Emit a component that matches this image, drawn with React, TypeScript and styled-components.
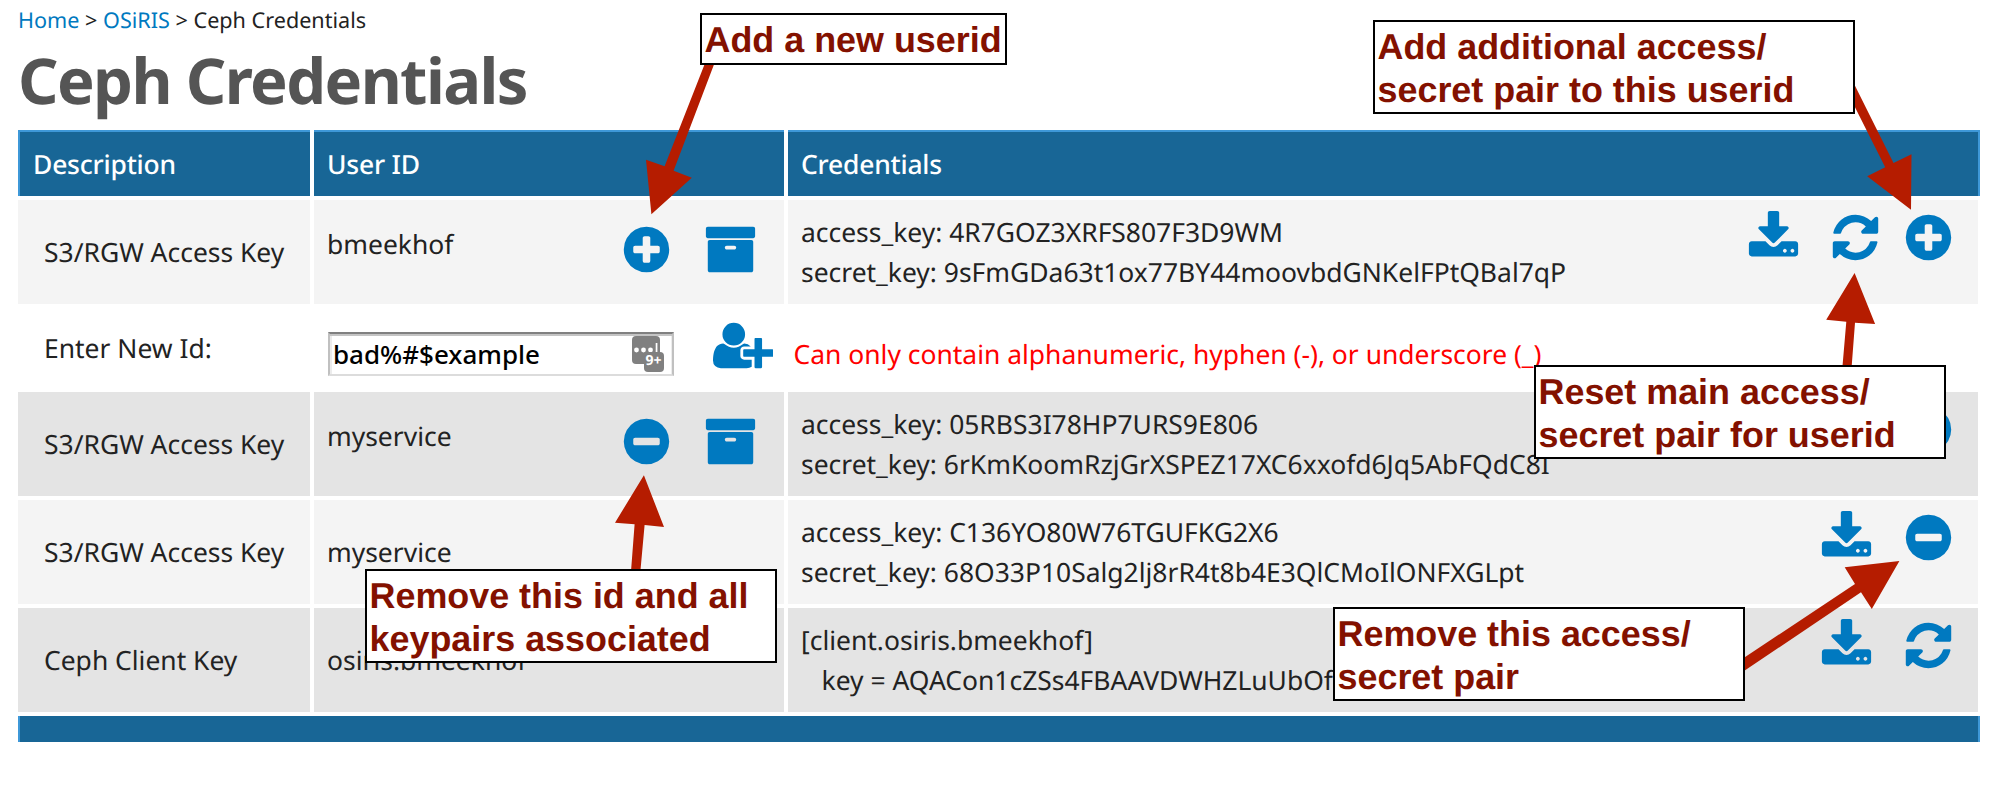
import React from "react";
import styled, { createGlobalStyle } from "styled-components";

const GlobalStyle = createGlobalStyle`
  * { box-sizing: border-box; }
  body {
    margin: 0;
    background: #fff;
    color: #222;
    font-family: "Noto Sans", sans-serif;
    font-size: 26.45px;
    line-height: 40px;
    text-rendering: geometricPrecision;
  }
`;

const Page = styled.div`
  position: relative;
  width: 1996px;
  height: 798px;
  overflow: hidden;
  padding: 0 16px 0 18px;
`;

const Breadcrumb = styled.nav`
  height: 41px;
  padding-top: 1px;
  font-size: 21.6px;
  white-space: nowrap;
`;

const Crumb = styled.a`
  color: #0079c0;
  text-decoration: none;
`;

const Title = styled.h1`
  margin: 0;
  height: 89px;
  color: #555;
  font-size: 63.2px;
  font-weight: 700;
  line-height: 78px;
  letter-spacing: -1.6px;
  white-space: nowrap;
`;

const Table = styled.div`
  display: flex;
  flex-direction: column;
  gap: 4px;
`;

const rowGrid = `
  display: grid;
  grid-template-columns: 292px 470px 1fr;
  column-gap: 4px;
`;

const HeaderRow = styled.div`
  ${rowGrid}
  height: 66px;
`;

const HeaderCell = styled.div`
  background: #186696;
  color: #fff;
  border-top: 2px solid #3e98d8;
  padding: 12px 13px;
  font-weight: 500;
  letter-spacing: -0.2px;
  &:first-child { border-left: 2px solid #3e98d8; }
  &:last-child { border-right: 2px solid #3e98d8; }
`;

const Row = styled.div<{ $shade: "light" | "dark" }>`
  ${rowGrid}
  height: 104px;
  margin-right: 2px;
  & > * { background: ${(p) => (p.$shade === "light" ? "#f4f4f4" : "#e4e4e4")}; }
`;

const DescriptionCell = styled.div`
  display: flex;
  align-items: center;
  padding-left: 26px;
  white-space: nowrap;
`;

const UserCell = styled.div<{ $top: number }>`
  display: flex;
  justify-content: space-between;
  padding: ${(p) => p.$top}px 27px 0 13px;
`;

const CredentialCell = styled.div`
  display: flex;
  justify-content: space-between;
  padding: 12px 23.5px 0 13px;
`;

const Secret = styled.div`
  white-space: pre;
`;

const Actions = styled.div<{ $gap: number }>`
  display: flex;
  gap: ${(p) => p.$gap}px;
  height: 53px;
  margin-top: -1.5px;
`;

const DownloadSlot = styled.span`
  display: flex;
  margin-right: 9px;
`;

const NewIdRow = styled.div`
  ${rowGrid}
  height: 80px;
`;

const NewIdLabel = styled.label`
  padding: 20px 0 0 26px;
`;

const NewIdField = styled.div`
  display: flex;
  align-items: flex-start;
  justify-content: space-between;
  padding: 11px 11px 0 14px;
`;

const InputFrame = styled.div`
  display: flex;
  width: 346px;
  height: 44px;
  margin-top: 13px;
  padding-right: 8px;
  background: #fff;
  border: 2px solid #c0c0c0;
  border-top-color: #808080;
  border-bottom-color: #dcdcdc;
  box-shadow: inset 0 2px 0 #c4c4c4, inset 2px 0 0 #ececec, inset -1px 0 0 #ececec;
`;

const TextInput = styled.input`
  flex: 1;
  min-width: 0;
  height: 40px;
  border: 0;
  outline: 0;
  padding: 0 0 0 3px;
  background: transparent;
  color: #000;
  font: 500 26px "Noto Sans", sans-serif;
`;

const ErrorText = styled.div`
  padding: 26px 0 0 5.5px;
  color: #f00;
  white-space: nowrap;
`;

const FooterBar = styled.div`
  height: 26px;
  background: #186696;
  border: solid #3e98d8;
  border-width: 0 2px;
`;

const Glyph = styled.svg`
  display: block;
  flex: none;
  fill: #0079c0;
`;

const Badge = styled.svg`
  flex: none;
  margin-top: 2px;
`;

const Arrows = styled.svg`
  position: absolute;
  left: 0;
  top: 0;
  fill: #b51c00;
`;

const Note = styled.div<{ $x: number; $y: number; $w: number; $h: number }>`
  position: absolute;
  left: ${(p) => p.$x}px;
  top: ${(p) => p.$y}px;
  width: ${(p) => p.$w}px;
  height: ${(p) => p.$h}px;
  padding: 3.5px 0 0 2.5px;
  border: 2px solid #000;
  background: #fff;
  color: #831100;
  font: 700 35.9px/43px "Liberation Sans", Arial, sans-serif;
  white-space: pre;
`;

const circle =
  "m320-64q0 209-103 385.5t-279.5 279.5-385.5 103-385.5-103-279.5-279.5-103-385.5 103-385.5 279.5-279.5 385.5-103 385.5 103 279.5 279.5 103 385.5z";

const icons = {
  plus:
    "M1344 960v-128q0-26-19-45t-45-19h-256v-256q0-26-19-45t-45-19h-128q-26 0-45 19t-19 45v256h-256q-26 0-45 19t-19 45v128q0 26 19 45t45 19h256v256q0 26 19 45t45 19h128q26 0 45-19t19-45v-256h256q26 0 45-19t19-45z" + circle,
  minus:
    "M1344 960v-128q0-26-19-45t-45-19h-768q-26 0-45 19t-19 45v128q0 26 19 45t45 19h768q26 0 45-19t19-45z" + circle,
  archive:
    "M1088 832q0-26-19-45t-45-19h-256q-26 0-45 19t-19 45 19 45 45 19h256q26 0 45-19t19-45zm576-192v960q0 26-19 45t-45 19h-1408q-26 0-45-19t-19-45v-960q0-26 19-45t45-19h1408q26 0 45 19t19 45zm64-448v256q0 26-19 45t-45 19h-1536q-26 0-45-19t-19-45v-256q0-26 19-45t45-19h1536q26 0 45 19t19 45z",
  download:
    "M1344 1344q0-26-19-45t-45-19-45 19-19 45 19 45 45 19 45-19 19-45zm256 0q0-26-19-45t-45-19-45 19-19 45 19 45 45 19 45-19 19-45zm128-224v320q0 40-28 68t-68 28h-1472q-40 0-68-28t-28-68v-320q0-40 28-68t68-28h465l135 136q58 56 136 56t136-56l136-136h464q40 0 68 28t28 68zm-325-569q17 41-14 70l-448 448q-18 19-45 19t-45-19l-448-448q-31-29-14-70 17-39 59-39h256v-448q0-26 19-45t45-19h256q26 0 45 19t19 45v448h256q42 0 59 39z",
  refresh:
    "M1639 1056q0 5-1 7-64 268-268 434.5t-478 166.5q-146 0-282.5-55t-243.5-157l-129 129q-19 19-45 19t-45-19-19-45v-448q0-26 19-45t45-19h448q26 0 45 19t19 45-19 45l-137 137q71 66 161 102t187 36q134 0 250-65t186-179q11-17 53-117 8-23 30-23h192q13 0 22.5 9.5t9.5 22.5zm25-800v448q0 26-19 45t-45 19h-448q-26 0-45-19t-19-45 19-45l138-138q-148-137-349-137-134 0-250 65t-186 179q-11 17-53 117-8 23-30 23h-199q-13 0-22.5-9.5t-9.5-22.5v-7q65-268 270-434.5t480-166.5q146 0 284 55.5t245 156.5l130-129q19-19 45-19t45 19 19 45z",
  userPlus:
    "M704 896q-159 0-271.5-112.5t-112.5-271.5 112.5-271.5 271.5-112.5 271.5 112.5 112.5 271.5-112.5 271.5-271.5 112.5zm960 128h352q13 0 22.5 9.5t9.5 22.5v192q0 13-9.5 22.5t-22.5 9.5h-352v352q0 13-9.5 22.5t-22.5 9.5h-192q-13 0-22.5-9.5t-9.5-22.5v-352h-352q-13 0-22.5-9.5t-9.5-22.5v-192q0-13 9.5-22.5t22.5-9.5h352v-352q0-13 9.5-22.5t22.5-9.5h192q13 0 22.5 9.5t9.5 22.5v352zm-736 224q0 52 38 90t90 38h256v238q-68 50-171 50h-874q-121 0-194-69t-73-190q0-53 3.5-103.5t14-109 26.5-108.5 43-97.5 62-81 85.5-53.5 111.5-20q19 0 39 17 79 61 154.5 91.5t164.5 30.5 164.5-30.5 154.5-91.5q20-17 39-17 132 0 217 96h-223q-52 0-90 38t-38 90v192z",
};

type IconName = keyof typeof icons;

function Icon({ name }: { name: IconName }) {
  const wide = name === "userPlus";
  return (
    <Glyph width={wide ? 60.4 : 53} height={53} viewBox={wide ? "0 0 2048 1792" : "0 0 1792 1792"}>
      <path d={icons[name]} />
    </Glyph>
  );
}

function ManagerBadge() {
  return (
    <Badge width="32" height="37" viewBox="0 0 32 37">
      <rect x="0" y="0" width="28" height="28" rx="4" fill="#808080" />
      <circle cx="4.5" cy="14" r="2.4" fill="#fff" />
      <circle cx="11.5" cy="14" r="2.4" fill="#fff" />
      <circle cx="18.5" cy="14" r="2.4" fill="#fff" />
      <rect x="23.7" y="7" width="1.7" height="10" fill="#fff" />
      <rect x="12" y="16" width="20" height="20" rx="4" fill="#808080" />
      <text x="13.4" y="28.9" fill="#fff" fontSize="14" fontWeight="700" fontFamily="Noto Sans">9+</text>
    </Badge>
  );
}

interface KeyRow {
  description: string;
  user: string;
  userTop: number;
  userActions: IconName[];
  lines: [string, string];
  actions: IconName[];
  shade: "light" | "dark";
}

const first: KeyRow = {
  description: "S3/RGW Access Key",
  user: "bmeekhof",
  userTop: 24,
  userActions: ["plus", "archive"],
  lines: ["access_key: 4R7GOZ3XRFS807F3D9WM", "secret_key: 9sFmGDa63t1ox77BY44moovbdGNKelFPtQBal7qP"],
  actions: ["download", "refresh", "plus"],
  shade: "light",
};

const rest: KeyRow[] = [
  {
    description: "S3/RGW Access Key",
    user: "myservice",
    userTop: 24,
    userActions: ["minus", "archive"],
    lines: ["access_key: 05RBS3I78HP7URS9E806", "secret_key: 6rKmKoomRzjGrXSPEZ17XC6xxofd6Jq5AbFQdC8I"],
    actions: ["download", "refresh", "plus"],
    shade: "dark",
  },
  {
    description: "S3/RGW Access Key",
    user: "myservice",
    userTop: 32,
    userActions: [],
    lines: ["access_key: C136YO80W76TGUFKG2X6", "secret_key: 68O33P10Salg2lj8rR4t8b4E3QlCMoIlONFXGLpt"],
    actions: ["download", "minus"],
    shade: "light",
  },
  {
    description: "Ceph Client Key",
    user: "osiris.bmeekhof",
    userTop: 32,
    userActions: [],
    lines: ["[client.osiris.bmeekhof]", "   key = AQACon1cZSs4FBAAVDWHZLuUbOf"],
    actions: ["download", "refresh"],
    shade: "dark",
  },
];

function CredentialRow({ row }: { row: KeyRow }) {
  return (
    <Row $shade={row.shade}>
      <DescriptionCell>{row.description}</DescriptionCell>
      <UserCell $top={row.userTop}>
        <span>{row.user}</span>
        <Actions $gap={31}>
          {row.userActions.map((a) => <Icon key={a} name={a} />)}
        </Actions>
      </UserCell>
      <CredentialCell>
        <Secret>{row.lines.join("\n")}</Secret>
        <Actions $gap={20}>
          {row.actions.map((a) =>
            a === "download" ? <DownloadSlot key={a}><Icon name={a} /></DownloadSlot> : <Icon key={a} name={a} />
          )}
        </Actions>
      </CredentialCell>
    </Row>
  );
}

export default function App() {
  return (
    <Page>
      <GlobalStyle />
      <Breadcrumb>
        <Crumb>Home</Crumb> &gt; <Crumb>OSiRIS</Crumb> &gt; Ceph Credentials
      </Breadcrumb>
      <Title>Ceph Credentials</Title>
      <Table>
        <HeaderRow>
          <HeaderCell>Description</HeaderCell>
          <HeaderCell>User ID</HeaderCell>
          <HeaderCell>Credentials</HeaderCell>
        </HeaderRow>
        <CredentialRow row={first} />
        <NewIdRow>
          <NewIdLabel htmlFor="new-id">Enter New Id:</NewIdLabel>
          <NewIdField>
            <InputFrame>
              <TextInput id="new-id" defaultValue="bad%#$example" />
              <ManagerBadge />
            </InputFrame>
            <Icon name="userPlus" />
          </NewIdField>
          <ErrorText>Can only contain alphanumeric, hyphen (-), or underscore (_)</ErrorText>
        </NewIdRow>
        {rest.map((row, i) => <CredentialRow key={i} row={row} />)}
        <FooterBar />
      </Table>
      <Arrows width="1996" height="798" viewBox="0 0 1996 798">
        <path d="M704.3 65H713.8L673.6 170.7L691.8 177.7L651.4 214.3L646 159.7L664.6 166.3Z" />
        <path d="M1855 85.7L1893.5 163L1911.5 154.3L1911 209.7L1867.2 176.3L1885.2 167.3L1855 107.3Z" />
        <path d="M1854.6 273L1875.1 324L1855 322.7L1851.7 366H1842.5L1846.3 321.7L1826.2 319.7Z" />
        <path d="M643.9 475.3L664 527L644.6 525L640.5 570H631.1L634.6 524.3L615 522.7Z" />
        <path d="M1899.4 561L1871.8 609L1861 592.3L1744 671V657.7L1855 584L1844.7 567.3Z" />
      </Arrows>
      <Note $x={700} $y={13} $w={307} $h={52}>Add a new userid</Note>
      <Note $x={1373} $y={20} $w={482} $h={94}>{"Add additional access/\nsecret pair to this userid"}</Note>
      <Note $x={1534} $y={365} $w={412} $h={94}>{"Reset main access/\nsecret pair for userid"}</Note>
      <Note $x={365} $y={569} $w={412} $h={94}>{"Remove this id and all\nkeypairs associated"}</Note>
      <Note $x={1333} $y={607} $w={412} $h={94}>{"Remove this access/\nsecret pair"}</Note>
    </Page>
  );
}
